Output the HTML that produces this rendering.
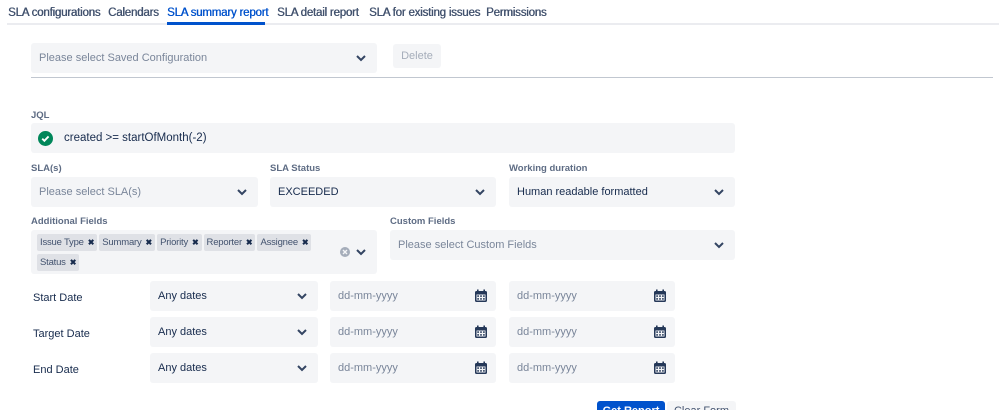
<!DOCTYPE html>
<html><head><style>
body{margin:0;width:999px;height:410px;overflow:hidden;background:#fff;font-family:"Liberation Sans",sans-serif;color:#172b4d;position:relative}
.a{position:absolute}
.tab{position:absolute;top:7px;font-size:11.5px;letter-spacing:-0.2px;color:#42526e;white-space:nowrap;text-shadow:0.4px 0 0 currentColor}
.box{position:absolute;background:#f4f5f7;border-radius:3px;font-size:11px;box-sizing:border-box;padding-left:8px;display:flex;align-items:center}
.ph{color:#7a869a}
.lbl{position:absolute;font-size:9.5px;font-weight:bold;color:#5e6c84}
.chev{position:absolute;right:10px;top:50%;margin-top:-4px;width:12px;height:8px}
.cal{position:absolute;right:8px;top:50%;margin-top:-7px}
.rl{position:absolute;left:33px;font-size:11px;color:#172b4d}
.tag{display:inline-block;background:#dfe1e6;border-radius:2px;font-size:9.5px;color:#42526e;padding:2px 3px;margin:0 2px 3px 0;height:13px;line-height:13px;letter-spacing:-0.2px}
.tag b{font-size:8px;margin-left:4px;color:#172b4d}
</style></head><body>
<div class="tab" style="left:8px">SLA configurations</div>
<div class="tab" style="left:108px">Calendars</div>
<div class="tab" style="left:167px;color:#0052cc">SLA summary report</div>
<div class="tab" style="left:277px">SLA detail report</div>
<div class="tab" style="left:369px">SLA for existing issues</div>
<div class="tab" style="left:486px">Permissions</div>
<div class="a" style="left:7px;top:23px;width:992px;height:2px;background:#ebecf0"></div>
<div class="a" style="left:167px;top:22px;width:98px;height:3px;background:#0052cc"></div>

<div class="box" style="left:31px;top:43px;width:346px;height:30px"><span class="ph">Please select Saved Configuration</span><svg class="chev" viewBox="0 0 12 8"><path d="M2 2l4 4 4-4" stroke="#344563" stroke-width="2" fill="none"/></svg></div>
<div class="box" style="left:393px;top:44px;width:48px;height:24px;justify-content:center;padding:0;color:#a5adba">Delete</div>
<div class="a" style="left:31px;top:77px;width:962px;height:1px;background:#c1c7d0"></div>

<div class="lbl" style="left:31px;top:110px">JQL</div>
<div class="box" style="left:31px;top:123px;width:704px;height:30px;padding-left:7px"><svg width="15" height="15" viewBox="0 0 16 16"><circle cx="8" cy="8" r="8" fill="#00875a"/><path d="M4.5 8.2l2.3 2.2 4.5-4.6" stroke="#fff" stroke-width="2" fill="none"/></svg><span style="margin-left:11px;font-size:11.5px">created &gt;= startOfMonth(-2)</span></div>

<div class="lbl" style="left:31px;top:163px">SLA(s)</div>
<div class="lbl" style="left:270px;top:163px">SLA Status</div>
<div class="lbl" style="left:509px;top:163px">Working duration</div>
<div class="box" style="left:31px;top:177px;width:227px;height:30px"><span class="ph">Please select SLA(s)</span><svg class="chev" viewBox="0 0 12 8"><path d="M2 2l4 4 4-4" stroke="#344563" stroke-width="2" fill="none"/></svg></div>
<div class="box" style="left:270px;top:177px;width:226px;height:30px">EXCEEDED<svg class="chev" viewBox="0 0 12 8"><path d="M2 2l4 4 4-4" stroke="#344563" stroke-width="2" fill="none"/></svg></div>
<div class="box" style="left:509px;top:177px;width:226px;height:30px">Human readable formatted<svg class="chev" viewBox="0 0 12 8"><path d="M2 2l4 4 4-4" stroke="#344563" stroke-width="2" fill="none"/></svg></div>

<div class="lbl" style="left:31px;top:216px">Additional Fields</div>
<div class="lbl" style="left:390px;top:216px">Custom Fields</div>
<div class="box" style="left:31px;top:230px;width:346px;height:44px;display:block;padding:4px 0 0 6px">
<div style="width:300px"><span class="tag">Issue Type<b>✖</b></span><span class="tag">Summary<b>✖</b></span><span class="tag">Priority<b>✖</b></span><span class="tag">Reporter<b>✖</b></span><span class="tag">Assignee<b>✖</b></span><span class="tag">Status<b>✖</b></span></div>
<svg class="a" style="left:309px;top:17px" width="10" height="10" viewBox="0 0 10 10"><circle cx="5" cy="5" r="5" fill="#a5adba"/><path d="M3 3l4 4M7 3l-4 4" stroke="#f4f5f7" stroke-width="1.4"/></svg>
<svg class="chev" viewBox="0 0 12 8"><path d="M2 2l4 4 4-4" stroke="#344563" stroke-width="2" fill="none"/></svg></div>
<div class="box" style="left:390px;top:230px;width:345px;height:30px"><span class="ph">Please select Custom Fields</span><svg class="chev" viewBox="0 0 12 8"><path d="M2 2l4 4 4-4" stroke="#344563" stroke-width="2" fill="none"/></svg></div>

<div class="rl" style="top:292px">Start Date</div>
<div class="rl" style="top:328px">Target Date</div>
<div class="rl" style="top:364px">End Date</div>
<div id="rows"></div>
<script>
var h='';[281,317,353].forEach(function(t){
var cal='<svg class="cal" width="14" height="14" viewBox="0 0 14 14"><rect x="1" y="2" width="12" height="11" rx="1.5" fill="#253858"/><rect x="3" y="0.5" width="1.6" height="3" fill="#253858"/><rect x="9.4" y="0.5" width="1.6" height="3" fill="#253858"/><rect x="2.5" y="5.5" width="9" height="6" fill="#f4f5f7"/><g fill="#253858"><rect x="3.3" y="6.3" width="1.6" height="1.6"/><rect x="6.2" y="6.3" width="1.6" height="1.6"/><rect x="9.1" y="6.3" width="1.6" height="1.6"/><rect x="3.3" y="9.1" width="1.6" height="1.6"/><rect x="6.2" y="9.1" width="1.6" height="1.6"/><rect x="9.1" y="9.1" width="1.6" height="1.6"/></g></svg>';
h+='<div class="box" style="left:150px;top:'+t+'px;width:168px;height:30px">Any dates<svg class="chev" viewBox="0 0 12 8"><path d="M2 2l4 4 4-4" stroke="#344563" stroke-width="2" fill="none"/></svg></div>';
h+='<div class="box" style="left:330px;top:'+t+'px;width:166px;height:30px"><span class="ph">dd-mm-yyyy</span>'+cal+'</div>';
h+='<div class="box" style="left:509px;top:'+t+'px;width:166px;height:30px"><span class="ph">dd-mm-yyyy</span>'+cal+'</div>';
});document.getElementById('rows').innerHTML=h;
</script>
<div class="a" style="left:597px;top:401px;width:68px;height:9px;overflow:hidden;background:#0052cc;border-radius:3px 3px 0 0;color:#fff;font-size:11px;font-weight:bold;text-align:center;line-height:20px">Get Report</div>
<div class="a" style="left:667px;top:401px;width:69px;height:9px;overflow:hidden;background:#f4f5f7;border-radius:3px 3px 0 0;color:#42526e;font-size:11px;text-align:center;line-height:20px">Clear Form</div>
</body></html>
